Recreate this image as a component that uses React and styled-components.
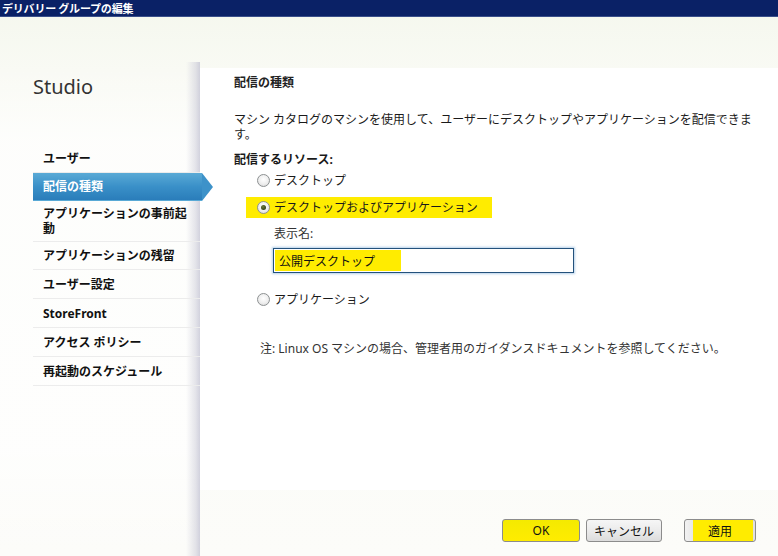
import React from "react";
import styled, { createGlobalStyle, css } from "styled-components";

const FONT = `"Noto Sans", "Noto Sans CJK JP", sans-serif`;
const JP = `"Noto Sans CJK JP", "Noto Sans", sans-serif`;
const YELLOW = "#ffec00";

const Global = createGlobalStyle`
  html, body { margin: 0; padding: 0; background: #fbfcf8; }
  * { box-sizing: border-box; }
`;

const Window = styled.div`
  width: 778px;
  height: 556px;
  overflow: hidden;
  display: flex;
  flex-direction: column;
  font-family: ${FONT};
  font-size: 12px;
  color: #1a1a1a;
  background: linear-gradient(180deg, #f4f7ed 0px, #f9faf4 70px, #fcfcf9 100%);
`;

const TitleBar = styled.div`
  height: 17px;
  flex: none;
  background: #0a2166;
  border-bottom: 1px solid #3a4f8a;
  color: #fff;
  font-family: ${JP};
  font-weight: 700;
  font-size: 11px;
  line-height: 16px;
  padding-left: 2px;
  letter-spacing: -0.2px;
`;

const Main = styled.div`
  flex: 1;
  display: grid;
  grid-template-columns: 200px 1fr;
  min-height: 0;
`;

const Sidebar = styled.aside`
  position: relative;
  z-index: 2;
  padding: 58px 0 0 33px;
  background: linear-gradient(180deg, rgba(255,255,255,0) 0px, rgba(255,255,255,0) 50px, rgba(255,255,255,0.7) 120px, rgba(255,255,255,0.7) 80%, rgba(255,255,255,0) 100%);
  &::after {
    content: "";
    position: absolute;
    top: 45px;
    bottom: 0;
    right: 0;
    width: 14px;
    background: linear-gradient(90deg, rgba(205,205,218,0) 0%, rgba(200,200,214,0.5) 70%, rgba(190,190,208,0.7) 100%);
    z-index: 0;
    pointer-events: none;
  }
`;

const Brand = styled.div`
  font-family: ${FONT};
  font-size: 20px;
  line-height: 24px;
  color: #333;
  margin-bottom: 46px;
`;

const NavList = styled.ul`
  list-style: none;
  margin: 0;
  padding: 0;
  width: 167px;
`;

const NavItem = styled.li`
  position: relative;
  z-index: 1;
  min-height: ${(p) => (p.$tall ? 29 : 28)}px;
  padding: 5px 8px 5px 10px;
  display: flex;
  align-items: center;
  font-weight: 700;
  font-size: 12px;
  line-height: 15px;
  color: #111;
  border-bottom: 1px solid #ececec;
  ${(p) =>
    p.$active &&
    css`
      color: #fff;
      width: 169px;
      border-bottom-color: transparent;
      background: linear-gradient(180deg, #5aaad6 0%, #3a90c8 50%, #2a7dba 100%);
      &::after {
        content: "";
        position: absolute;
        right: -11px;
        top: 0;
        border-top: 14px solid transparent;
        border-bottom: 14px solid transparent;
        border-left: 11px solid #3d92c9;
      }
    `}
`;

const RightCol = styled.div`
  display: flex;
  flex-direction: column;
  min-width: 0;
`;

const Panel = styled.section`
  margin-top: 51px;
  height: 422px;
  background: #fff;
  padding: 7px 8px 0 34px;
  display: flex;
  flex-direction: column;
  line-height: 15px;
`;

const Heading = styled.h2`
  margin: 0;
  font-size: 12px;
  line-height: 15px;
  font-weight: 700;
  color: #222;
`;

const Desc = styled.p`
  margin: 22px 0 0;
  width: 536px;
  font-size: 12px;
  line-height: 15px;
  color: #1a1a1a;
`;

const Label = styled.div`
  margin-top: ${(p) => p.$mt || 0}px;
  margin-left: ${(p) => p.$ml || 0}px;
  font-weight: ${(p) => (p.$bold ? 700 : 400)};
  font-size: 12px;
  line-height: 15px;
  color: ${(p) => (p.$muted ? "#333" : "#1a1a1a")};
`;

const Option = styled.label`
  display: flex;
  align-items: center;
  gap: 4px;
  width: fit-content;
  height: ${(p) => (p.$marked ? 21 : 20)}px;
  margin: ${(p) => p.$mt || 0}px 0 0 12px;
  padding: 0 14px 0 11px;
  background: ${(p) => (p.$marked ? YELLOW : "transparent")};
  font-size: 12px;
  color: #1a1a1a;
`;

const Radio = styled.span`
  position: relative;
  flex: none;
  width: 13px;
  height: 13px;
  border-radius: 50%;
  border: 1px solid #8d9192;
  background: radial-gradient(circle at 50% 40%, #ffffff 0%, #eeeeee 55%, #d2d2d2 100%);
  ${(p) =>
    p.$checked &&
    css`
      &::after {
        content: "";
        position: absolute;
        left: 3px;
        top: 3px;
        width: 5px;
        height: 5px;
        border-radius: 50%;
        background: radial-gradient(circle at 40% 35%, #6a7a3a, #1e2a0e);
      }
    `}
`;

const TextBox = styled.input`
  display: block;
  margin: 7px 0 0 39px;
  width: 301px;
  height: 25px;
  border: 1px solid #24527c;
  box-shadow: 0 0 2px 1px rgba(120, 170, 215, 0.55), inset 0 0 0 1px #fff;
  padding: 0 0 0 5px;
  font-family: ${JP};
  font-size: 12px;
  color: #111;
  outline: none;
  background: linear-gradient(90deg, ${YELLOW} 0px, ${YELLOW} 127px, #fff 127px);
`;

const Footer = styled.footer`
  display: flex;
  justify-content: flex-end;
  align-items: flex-start;
  padding: 29px 22px 0 0;
`;

const Button = styled.button`
  height: 23px;
  width: ${(p) => p.$w}px;
  margin-left: ${(p) => p.$ml || 0}px;
  border: 1px solid #8c8c8c;
  border-radius: 3px;
  font-family: ${FONT};
  font-size: 12px;
  color: #111;
  padding: 0;
  background: ${(p) =>
    p.$hl === "full"
      ? `linear-gradient(180deg, #f4ea00, ${YELLOW})`
      : p.$hl === "part"
      ? `linear-gradient(90deg, #f2f2f2 0px, #e8e8e8 8px, ${YELLOW} 8px, ${YELLOW} 68px, #e0e0e0 68px)`
      : "linear-gradient(180deg, #f6f6f6 0%, #ebebeb 50%, #dcdcdc 100%)"};
`;

const navItems = [
  "ユーザー",
  "配信の種類",
  "アプリケーションの事前起動",
  "アプリケーションの残留",
  "ユーザー設定",
  "StoreFront",
  "アクセス ポリシー",
  "再起動のスケジュール",
];

export default function App() {
  return (
    <Window>
      <Global />
      <TitleBar>デリバリー グループの編集</TitleBar>
      <Main>
        <Sidebar>
          <Brand>Studio</Brand>
          <NavList>
            {navItems.map((t, i) => (
              <NavItem key={t} $active={t === "配信の種類"} $tall={i >= 4}>
                {t}
              </NavItem>
            ))}
          </NavList>
        </Sidebar>
        <RightCol>
          <Panel>
            <Heading>配信の種類</Heading>
            <Desc>
              マシン カタログのマシンを使用して、ユーザーにデスクトップやアプリケーションを配信できます。
            </Desc>
            <Label $mt={10} $bold>
              配信するリソース:
            </Label>
            <Option $mt={3}>
              <Radio />
              デスクトップ
            </Option>
            <Option $mt={7} $marked>
              <Radio $checked />
              デスクトップおよびアプリケーション
            </Option>
            <Label $mt={8} $ml={40} $muted>
              表示名:
            </Label>
            <TextBox defaultValue="公開デスクトップ" />
            <Option $mt={16}>
              <Radio />
              アプリケーション
            </Option>
            <Label $mt={32} $ml={26} $muted>
              注: Linux OS マシンの場合、管理者用のガイダンスドキュメントを参照してください。
            </Label>
          </Panel>
          <Footer>
            <Button $w={78} $hl="full">OK</Button>
            <Button $w={76} $ml={6}>キャンセル</Button>
            <Button $w={72} $ml={22} $hl="part">適用</Button>
          </Footer>
        </RightCol>
      </Main>
    </Window>
  );
}
